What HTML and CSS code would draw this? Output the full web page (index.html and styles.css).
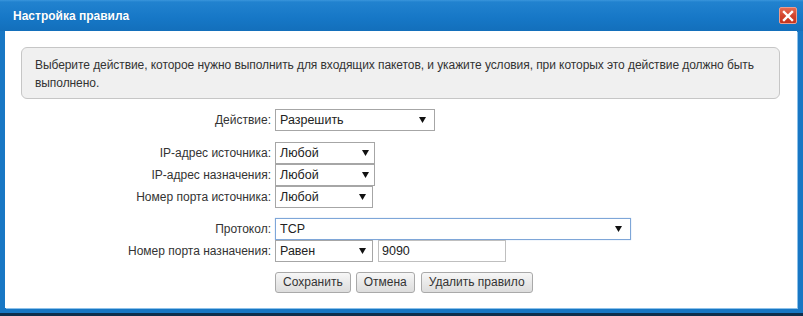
FILE: index.html
```html
<!DOCTYPE html>
<html lang="ru">
<head>
<meta charset="utf-8">
<title>Настройка правила</title>
<link rel="stylesheet" href="styles.css">
</head>
<body>
<div class="dialog">
  <div class="titlebar">
    <span class="title">Настройка правила</span>
    <span class="close"><svg width="12" height="12" viewBox="0 0 12 12"><path d="M2 2 L10 10 M10 2 L2 10" stroke="#fff" stroke-width="2.4" stroke-linecap="square"/></svg></span>
  </div>
  <div class="content">
    <div class="info">Выберите действие, которое нужно выполнить для входящих пакетов, и укажите условия, при которых это действие должно быть выполнено.</div>
    <div class="form">
      <div class="row first">
        <label class="lbl">Действие:</label>
        <div class="sel w-action"><span>Разрешить</span><svg class="arr" width="7" height="6" viewBox="0 0 7 6"><path d="M0 0 H7 L3.5 6 Z" fill="#111"/></svg></div>
      </div>
      <div class="group">
        <div class="row">
          <label class="lbl">IP-адрес источника:</label>
          <div class="sel w-ip"><span>Любой</span><svg class="arr" width="7" height="6" viewBox="0 0 7 6"><path d="M0 0 H7 L3.5 6 Z" fill="#111"/></svg></div>
        </div>
        <div class="row">
          <label class="lbl">IP-адрес назначения:</label>
          <div class="sel w-ip"><span>Любой</span><svg class="arr" width="7" height="6" viewBox="0 0 7 6"><path d="M0 0 H7 L3.5 6 Z" fill="#111"/></svg></div>
        </div>
        <div class="row">
          <label class="lbl">Номер порта источника:</label>
          <div class="sel w-port"><span>Любой</span><svg class="arr" width="7" height="6" viewBox="0 0 7 6"><path d="M0 0 H7 L3.5 6 Z" fill="#111"/></svg></div>
        </div>
      </div>
      <div class="group">
        <div class="row">
          <label class="lbl">Протокол:</label>
          <div class="sel w-proto focus"><span>TCP</span><svg class="arr" width="7" height="6" viewBox="0 0 7 6"><path d="M0 0 H7 L3.5 6 Z" fill="#111"/></svg></div>
        </div>
        <div class="row">
          <label class="lbl">Номер порта назначения:</label>
          <div class="sel w-port"><span>Равен</span><svg class="arr" width="7" height="6" viewBox="0 0 7 6"><path d="M0 0 H7 L3.5 6 Z" fill="#111"/></svg></div>
          <div class="input">9090</div>
        </div>
      </div>
      <div class="buttons">
        <button class="btn">Сохранить</button>
        <button class="btn">Отмена</button>
        <button class="btn">Удалить правило</button>
      </div>
    </div>
  </div>
  <div class="bottom"></div>
</div>
</body>
</html>
```

FILE: styles.css
```css
html, body {
  margin: 0;
  padding: 0;
}
body {
  width: 803px;
  height: 316px;
  overflow: hidden;
  background: #1877c4;
  font-family: "Liberation Sans", Arial, sans-serif;
  color: #333;
}
.dialog {
  display: flex;
  flex-direction: column;
  height: 316px;
}
.titlebar {
  height: 31px;
  flex: none;
  display: flex;
  align-items: center;
  justify-content: space-between;
  padding: 0 6px 0 13px;
  box-sizing: border-box;
  background: linear-gradient(#3a95dc 0, #2182cf 2px, #1677c6 60%, #136fbb 100%);
}
.title {
  color: #fff;
  font-weight: bold;
  font-size: 12px;
  margin-top: 1px;
  text-shadow: 0 0 1px rgba(0,0,0,0.15);
}
.close {
  width: 18px;
  height: 17px;
  box-sizing: border-box;
  border: 1px solid #ee9c8c;
  border-radius: 2px;
  background: linear-gradient(#e66a52, #d2432c 55%, #c4351f);
  display: flex;
  align-items: center;
  justify-content: center;
}
.content {
  flex: none;
  height: 277px;
  margin: 0 6px 0 5px;
  background: #fff;
  padding: 16px 17px 0 16px;
  box-sizing: border-box;
  box-shadow: 1px 1px 0 #8cc1ea;
}
.info {
  border: 1px solid #c6c6c6;
  border-radius: 6px;
  background: #f0f0f0;
  font-size: 12px;
  line-height: 18px;
  padding: 8px 12px 6px 13px;
  color: #333;
  letter-spacing: -0.07px;
}
.form {
  display: flex;
  flex-direction: column;
  margin-top: 10px;
}
.row {
  display: flex;
  align-items: center;
  height: 22px;
}
.group {
  margin-top: 11px;
  display: flex;
  flex-direction: column;
}
.group + .group {
  margin-top: 10px;
}
.lbl {
  width: 250px;
  flex: none;
  text-align: right;
  font-size: 12px;
  color: #333;
  margin-right: 4px;
}
.sel {
  height: 22px;
  box-sizing: border-box;
  border: 1px solid #a6a6a6;
  background: #fff;
  display: flex;
  align-items: center;
  justify-content: space-between;
  padding: 0 8px 0 4px;
  font-size: 12.5px;
  color: #222;
}
.sel .arr {
  flex: none;
}
.w-action { width: 160px; }
.w-ip { width: 100px; padding-right: 5px; }
.w-port { width: 98px; padding-right: 6px; }
.w-proto { width: 356px; }
.sel.focus {
  border-color: #7ea6d8;
  box-shadow: 0 0 1px 0 #a9c6ec;
}
.input {
  margin-left: 5px;
  width: 128px;
  height: 22px;
  box-sizing: border-box;
  border: 1px solid #bfbfbf;
  background: #fff;
  font-size: 12.5px;
  color: #222;
  padding: 0 3px;
  display: flex;
  align-items: center;
}
.buttons {
  display: flex;
  gap: 5px;
  margin-top: 10px;
  margin-left: 254px;
}
.btn {
  height: 21px;
  padding: 0 7px;
  border: 1px solid #a9a9a9;
  border-radius: 3px;
  background: linear-gradient(#f7f7f7, #e9e9e9 50%, #dddddd);
  font-family: "Liberation Sans", Arial, sans-serif;
  font-size: 12px;
  color: #333;
  line-height: 19px;
}
.buttons .btn + .btn + .btn {
  margin-left: 1px;
}
.bottom {
  flex: none;
  margin-top: 5px;
  height: 3px;
  background: #0e2f4d;
}
```
